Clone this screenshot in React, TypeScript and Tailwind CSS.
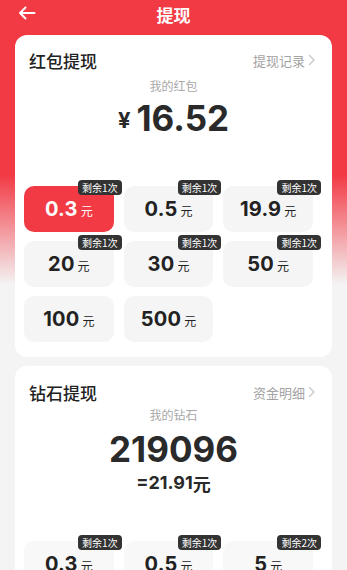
import React from "react";

const CJK = "font-['Noto_Sans_CJK_SC','Noto_Sans',sans-serif]";
const NUM = "font-['Inter','Noto_Sans_CJK_SC',sans-serif]";

type Opt = { v: string; badge?: string; active?: boolean };

function Chevron() {
  return (
    <svg width="8" height="12" viewBox="0 0 8 12" className="ml-[3px]">
      <path d="M1.5 1.5 L6 6 L1.5 10.5" fill="none" stroke="#c8c8c8" strokeWidth="1.4" strokeLinecap="round" strokeLinejoin="round" />
    </svg>
  );
}

function OptionBtn({ o, light }: { o: Opt; light?: boolean }) {
  return (
    <div
      className={
        "relative h-[46px] rounded-[10px] flex items-center justify-center " +
        (o.active ? "bg-[#f23a45] text-white" : light ? "bg-[#f8f8f8] text-[#222]" : "bg-[#f5f5f5] text-[#222]")
      }
    >
      <span className={NUM + " text-[20px] font-bold leading-none tracking-[0.2px]"}>{o.v}</span>
      <span className={CJK + " text-[12px] ml-[3px] mt-[4px] leading-none"}>元</span>
      {o.badge && (
        <div
          className={
            CJK +
            " absolute top-[-6px] right-[-8px] h-[15px] px-[4px] rounded-[4px] bg-[#333333] text-white text-[10px] leading-[15px] whitespace-nowrap"
          }
        >
          {o.badge}
        </div>
      )}
    </div>
  );
}

export default function App() {
  const red: Opt[] = [
    { v: "0.3", badge: "剩余1次", active: true },
    { v: "0.5", badge: "剩余1次" },
    { v: "19.9", badge: "剩余1次" },
    { v: "20", badge: "剩余1次" },
    { v: "30", badge: "剩余1次" },
    { v: "50", badge: "剩余1次" },
    { v: "100" },
    { v: "500" },
  ];
  const dia: Opt[] = [
    { v: "0.3", badge: "剩余1次" },
    { v: "0.5", badge: "剩余1次" },
    { v: "5", badge: "剩余2次" },
  ];
  return (
    <div
      className={
        CJK +
        " w-[347px] h-[570px] overflow-hidden bg-[linear-gradient(180deg,#f23a45_0px,#f23a45_175px,#f4f4f4_285px,#f4f4f4_100%)]"
      }
    >
      <div className="relative h-[28px] flex items-center justify-center">
        <svg width="18" height="14" viewBox="0 0 18 14" className="absolute left-[18px] top-[6px]">
          <path d="M16.5 7 H2 M7.5 1.5 L2 7 L7.5 12.5" fill="none" stroke="white" strokeWidth="2" strokeLinecap="round" strokeLinejoin="round" />
        </svg>
        <span className="text-white text-[17px] font-bold leading-none">提现</span>
      </div>

      <div className="mx-[15px] mt-[7px] bg-white rounded-[12px] pt-[14px] pb-[15px]">
        <div className="flex items-center justify-between px-[14px] h-[22px]">
          <span className="text-[17px] font-medium text-[#222] leading-none">红包提现</span>
          <span className="flex items-center text-[13px] text-[#a3a3a3] leading-none pr-[2px]">
            提现记录
            <Chevron />
          </span>
        </div>
        <div className="mt-[7px] text-center text-[12px] leading-[16px] text-[#a8a8a8]">我的红包</div>
        <div className="mt-[4px] h-[40px] flex items-center justify-center text-[#2a2a2a]">
          <span className={NUM + " text-[22px] font-bold mr-[6px] mt-[4px]"}>¥</span>
          <span className={NUM + " text-[35px] font-bold leading-none"}>16.52</span>
        </div>
        <div className="mt-[48px] grid grid-cols-3 gap-x-[10px] gap-y-[9px] pl-[9px] pr-[19px]">
          {red.map((o, i) => (
            <OptionBtn key={i} o={o} />
          ))}
        </div>
      </div>

      <div className="mx-[15px] mt-[9px] bg-white rounded-[12px] pt-[15px] pb-[20px]">
        <div className="flex items-center justify-between px-[14px] h-[22px]">
          <span className="text-[17px] font-medium text-[#222] leading-none">钻石提现</span>
          <span className="flex items-center text-[13px] text-[#a3a3a3] leading-none pr-[2px]">
            资金明细
            <Chevron />
          </span>
        </div>
        <div className="mt-[4px] text-center text-[12px] leading-[16px] text-[#a8a8a8]">我的钻石</div>
        <div className={NUM + " mt-[6px] h-[40px] flex items-center justify-center text-[35px] font-bold text-[#2a2a2a] leading-none"}>
          219096
        </div>
        <div className="mt-[2px] h-[24px] flex items-center justify-center text-[#2a2a2a]">
          <span className={NUM + " text-[18px] font-bold leading-none"}>=21.91</span>
          <span className="text-[18px] font-bold leading-none">元</span>
        </div>
        <div className="mt-[46px] grid grid-cols-3 gap-x-[10px] gap-y-[9px] pl-[9px] pr-[19px]">
          {dia.map((o, i) => (
            <OptionBtn key={i} o={o} light />
          ))}
        </div>
      </div>
    </div>
  );
}
